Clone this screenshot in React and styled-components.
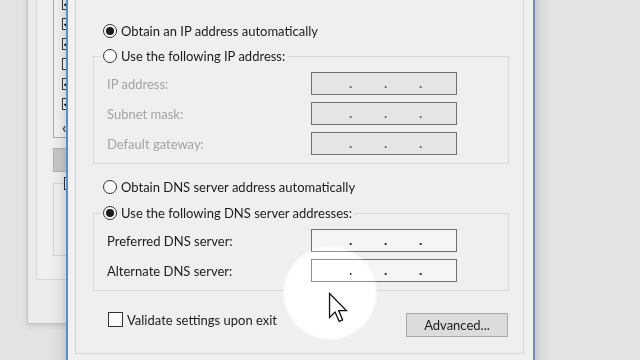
import React from 'react';
import styled, { createGlobalStyle } from 'styled-components';

const Global = createGlobalStyle`
  html, body { margin: 0; padding: 0; }
  body {
    width: 640px; height: 360px; overflow: hidden;
    background: #e3e3e3;
    font-family: Lato, "Open Sans", sans-serif;
  }
`;

const Desktop = styled.div`
  position: relative;
  width: 640px;
  height: 360px;
  overflow: hidden;
  background: #e3e3e3;
`;

/* ---------- back window ---------- */
const BackWindow = styled.div`
  position: absolute;
  left: 27px;
  top: -30px;
  width: 120px;
  height: 354px;
  box-sizing: border-box;
  border: 1px solid #c4c4c4;
  background: #ebebeb;
  box-shadow: 0 2px 5px rgba(0, 0, 0, 0.12);
  padding: 0 0 43px 8px;
  display: flex;
`;

const BackPanel = styled.div`
  flex: 1;
  border: 1px solid #d8d8d8;
  background: #f0f0f0;
  padding-left: 16px;
  display: flex;
  flex-direction: column;
`;

const ListBox = styled.div`
  box-sizing: border-box;
  height: 166px;
  border: 1px solid #a9a9a9;
  background: #f3f3f3;
  padding: 1px 0 0 8px;
  display: flex;
  flex-direction: column;
`;

const ListRow = styled.div`
  height: 20px;
  display: flex;
  align-items: center;
`;

const SmallCheck = styled.span`
  box-sizing: border-box;
  width: 12px;
  height: 12px;
  border: 1px solid #333;
  background: #fafafa;
  display: flex;
  align-items: center;
  justify-content: center;
`;

const HScroll = styled.div`
  margin-top: auto;
  height: 21px;
  display: flex;
  align-items: center;
  color: #444;
  font-size: 15px;
  font-weight: 700;
`;

const BackButton = styled.div`
  margin-top: 10px;
  height: 24px;
  box-sizing: border-box;
  border: 1px solid #b3b3b3;
  background: #c9c9c9;
`;

const BackGroup = styled.div`
  margin-top: 11px;
  height: 73px;
  box-sizing: border-box;
  border: 1px solid #d6d6d6;
  padding: 0 0 0 10px;
`;

const BackGroupMark = styled.span`
  display: block;
  box-sizing: border-box;
  width: 12px;
  height: 13px;
  margin-top: -7px;
  border: 1.5px solid #2b2b3b;
  background: #f3f3f3;
`;

/* ---------- front dialog ---------- */
const Dialog = styled.div`
  position: absolute;
  left: 66px;
  top: -20px;
  width: 469px;
  height: 400px;
  box-sizing: border-box;
  background: #f0f0f0;
  border-left: 2px solid #5a8cc8;
  border-right: 2px solid #7092b8;
  box-shadow: 0 0 14px rgba(40, 50, 60, 0.28);
  padding: 0 9px 0 7px;
`;

const TabPage = styled.div`
  border: 1px solid #d7d7d7;
  background: #efefef;
  padding: 40px 0 16px 0;
  display: flex;
  flex-direction: column;
  color: #1b1b1b;
  font-size: 13px;
`;

const RadioRow = styled.label`
  display: flex;
  align-items: center;
  gap: 4px;
  height: 20px;
  margin-left: ${p => p.$indent || 0}px;
  margin-top: ${p => p.$top || 0}px;
  white-space: nowrap;
`;

const RadioMark = styled.span`
  box-sizing: border-box;
  flex: none;
  width: 14px;
  height: 14px;
  border-radius: 50%;
  border: 1px solid #333;
  background: #fbfbfb;
  display: flex;
  align-items: center;
  justify-content: center;
  &::after {
    content: '';
    width: 8px;
    height: 8px;
    border-radius: 50%;
    background: #1c1c1c;
    display: ${p => (p.$on ? 'block' : 'none')};
  }
`;

const Group = styled.fieldset`
  margin: ${p => p.$top}px 14px 0 17px;
  padding: 0;
  border: 1px solid #d9d9d9;
  min-width: 0;
`;

const Legend = styled.legend`
  margin-left: 7px;
  padding: 0 2px;
`;

const FieldGrid = styled.div`
  display: grid;
  grid-template-columns: 204px 146px;
  grid-auto-rows: 23px;
  row-gap: 7px;
  padding: 6px 0 8px 13px;
  align-items: center;
`;

const FieldLabel = styled.span`
  color: ${p => (p.$disabled ? '#a3a3a3' : '#1b1b1b')};
  white-space: nowrap;
`;

const IpField = styled.div`
  box-sizing: border-box;
  height: 23px;
  border: 1px solid #707070;
  background: ${p => (p.$disabled ? '#e5e5e5' : '#f5f5f5')};
  display: flex;
  padding-left: 37px;
  line-height: 20px;
  font-size: 14px;
`;

const Dot = styled.span`
  width: 35px;
  color: ${p => (p.$disabled ? '#6a6a6a' : '#222')};
  font-weight: 700;
`;

const BottomRow = styled.div`
  margin-top: 21px;
  display: flex;
  justify-content: space-between;
  align-items: flex-start;
  padding: 0 15px 0 32px;
`;

const CheckLabel = styled.label`
  display: flex;
  align-items: center;
  gap: 4px;
  height: 15px;
  white-space: nowrap;
`;

const CheckMark = styled.span`
  box-sizing: border-box;
  width: 15px;
  height: 15px;
  border: 1px solid #333;
  background: #fbfbfb;
`;

const Button = styled.button`
  margin-top: 1px;
  width: 102px;
  height: 24px;
  box-sizing: border-box;
  border: 1px solid #a9a9a9;
  background: #dcdcdc;
  color: #1b1b1b;
  font-family: inherit;
  font-size: 13px;
  padding: 0;
`;

/* ---------- overlays ---------- */
const Spotlight = styled.div`
  position: absolute;
  left: 282px;
  top: 245px;
  width: 96px;
  height: 96px;
  border-radius: 50%;
  background: rgba(255, 255, 255, 0.18);
  backdrop-filter: contrast(1.5) brightness(1.14);
  -webkit-mask-image: radial-gradient(circle closest-side, #000 93%, transparent 100%);
  mask-image: radial-gradient(circle closest-side, #000 93%, transparent 100%);
`;

const Cursor = styled.svg`
  position: absolute;
  left: 328px;
  top: 292px;
`;

const CheckGlyph = () => (
  <svg width="10" height="10" viewBox="0 0 10 10">
    <path d="M1.5 5 L4 7.5 L8.5 2" fill="none" stroke="#111" strokeWidth="1.8" />
  </svg>
);

const listStates = [true, true, true, true, false, true, true];

const Ip = ({ disabled }) => (
  <IpField $disabled={disabled}>
    <Dot $disabled={disabled}>.</Dot>
    <Dot $disabled={disabled}>.</Dot>
    <Dot $disabled={disabled}>.</Dot>
  </IpField>
);

export default function App() {
  return (
    <Desktop>
      <Global />
      <BackWindow>
        <BackPanel>
          <ListBox>
            {listStates.map((c, i) => (
              <ListRow key={i}>
                <SmallCheck>{c && <CheckGlyph />}</SmallCheck>
              </ListRow>
            ))}
            <HScroll>&lsaquo;</HScroll>
          </ListBox>
          <BackButton />
          <BackGroup>
            <BackGroupMark />
          </BackGroup>
        </BackPanel>
      </BackWindow>

      <Dialog>
        <TabPage>
          <RadioRow $indent={27}>
            <RadioMark $on />
            Obtain an IP address automatically
          </RadioRow>
          <Group $top={5}>
            <Legend>
              <RadioRow>
                <RadioMark />
                Use the following IP address:
              </RadioRow>
            </Legend>
            <FieldGrid>
              <FieldLabel $disabled>IP address:</FieldLabel>
              <Ip disabled />
              <FieldLabel $disabled>Subnet mask:</FieldLabel>
              <Ip disabled />
              <FieldLabel $disabled>Default gateway:</FieldLabel>
              <Ip disabled />
            </FieldGrid>
          </Group>
          <RadioRow $indent={27} $top={13}>
            <RadioMark />
            Obtain DNS server address automatically
          </RadioRow>
          <Group $top={6}>
            <Legend>
              <RadioRow>
                <RadioMark $on />
                Use the following DNS server addresses:
              </RadioRow>
            </Legend>
            <FieldGrid>
              <FieldLabel>Preferred DNS server:</FieldLabel>
              <Ip />
              <FieldLabel>Alternate DNS server:</FieldLabel>
              <Ip />
            </FieldGrid>
          </Group>
          <BottomRow>
            <CheckLabel>
              <CheckMark />
              Validate settings upon exit
            </CheckLabel>
            <Button>Advanced...</Button>
          </BottomRow>
        </TabPage>
      </Dialog>

      <Spotlight />
      <Cursor width="22" height="32" viewBox="0 0 15 22">
        <path
          d="M1 1 L1 17.5 L4.8 13.8 L7.6 20.2 L10 19.2 L7.3 12.8 L12.6 12.8 Z"
          fill="#fff"
          stroke="#111"
          strokeWidth="0.9"
          strokeLinejoin="miter"
        />
      </Cursor>
    </Desktop>
  );
}
